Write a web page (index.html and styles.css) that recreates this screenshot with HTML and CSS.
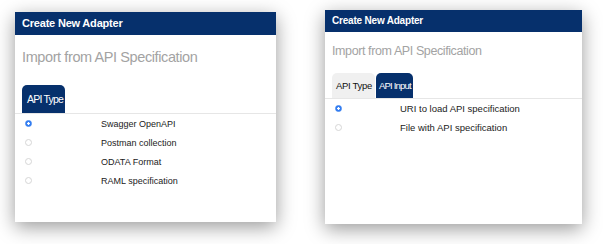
FILE: index.html
```html
<!DOCTYPE html>
<html lang="en">
<head>
    <meta charset="UTF-8">
    <title>Create New Adapter</title>
    <link rel="stylesheet" href="styles.css">
</head>
<body>
    <div class="dialog dialog-left">
        <div class="dialog-header">Create New Adapter</div>
        <div class="dialog-body">
            <h2 class="subtitle">Import from API Specification</h2>
            <div class="tabs">
                <div class="tab active">API Type</div>
            </div>
            <ul class="options">
                <li><input type="radio" name="type" checked><span>Swagger OpenAPI</span></li>
                <li><input type="radio" name="type"><span>Postman collection</span></li>
                <li><input type="radio" name="type"><span>ODATA Format</span></li>
                <li><input type="radio" name="type"><span>RAML specification</span></li>
            </ul>
        </div>
    </div>
    <div class="dialog dialog-right">
        <div class="dialog-header">Create New Adapter</div>
        <div class="dialog-body">
            <h2 class="subtitle">Import from API Specification</h2>
            <div class="tabs">
                <div class="tab">API Type</div>
                <div class="tab active">API Input</div>
            </div>
            <ul class="options">
                <li><input type="radio" name="input" checked><span>URI to load API specification</span></li>
                <li><input type="radio" name="input"><span>File with API specification</span></li>
            </ul>
        </div>
    </div>
</body>
</html>
```

FILE: styles.css
```css
body {
    margin: 0;
    width: 603px;
    height: 244px;
    background: #fff;
    font-family: "Liberation Sans", Arial, sans-serif;
    display: flex;
    align-items: flex-start;
    overflow: hidden;
}
.dialog {
    background: #fff;
    box-shadow: 0 5px 18px rgba(0, 0, 0, 0.4);
    display: flex;
    flex-direction: column;
}
.dialog-left {
    margin: 12px 0 0 15px;
    width: 261px;
    height: 210px;
}
.dialog-right {
    margin: 10px 0 0 49px;
    width: 257px;
    height: 214px;
}
.dialog-header {
    background: #06306c;
    color: #fff;
    font-weight: bold;
    letter-spacing: -0.2px;
    padding-left: 7px;
}
.dialog-left .dialog-header {
    height: 23px;
    line-height: 23px;
    font-size: 11px;
}
.dialog-right .dialog-header {
    height: 22px;
    line-height: 21px;
    font-size: 10px;
}
.dialog-body {
    padding-left: 7px;
}
.subtitle {
    margin: 0;
    font-weight: normal;
    color: #a3a3a3;
}
.dialog-left .subtitle {
    font-size: 14.5px;
    letter-spacing: -0.4px;
    line-height: 20px;
    margin-top: 12px;
    margin-bottom: 18px;
}
.dialog-right .subtitle {
    font-size: 12.5px;
    letter-spacing: -0.4px;
    line-height: 18px;
    margin-top: 10px;
    margin-bottom: 13px;
}
.tabs {
    display: flex;
    gap: 1px;
    border-bottom: 1px solid #e6e6e6;
    margin-left: -7px;
    padding-left: 7px;
}
.tab {
    border-radius: 5px 5px 0 0;
    background: #f0f0f0;
    color: #111;
    white-space: nowrap;
    letter-spacing: -0.3px;
    box-sizing: border-box;
}
.tab.active {
    background: #06306c;
    color: #fff;
    letter-spacing: -0.8px;
}
.dialog-left .tab {
    height: 28px;
    line-height: 28px;
    width: 43px;
    font-size: 10.5px;
    padding-left: 5px;
}
.dialog-right .tab {
    height: 25px;
    line-height: 25px;
    font-size: 9.5px;
    padding: 0 3px 0 4px;
}
.dialog-right .tab.active {
    width: 37px;
    padding-left: 3px;
}
.options {
    list-style: none;
    margin: 0;
    padding: 0;
}
.options li {
    display: flex;
    align-items: center;
    height: 19px;
    color: #222;
    font-size: 9px;
}
.dialog-right .options li {
    font-size: 9.5px;
}
.options input {
    appearance: none;
    -webkit-appearance: none;
    margin: 0 0 0 3px;
    width: 7px;
    height: 7px;
    border-radius: 50%;
    border: 1px solid #d6d6d6;
    background: #fff;
    box-sizing: border-box;
}
.options input:checked {
    border-color: #3b82f0;
    background: radial-gradient(circle, #fff 0 1px, #2f7bf2 1.5px);
}
.dialog-left .options span {
    margin-left: 69px;
}
.dialog-right .options span {
    margin-left: 58px;
}
```
